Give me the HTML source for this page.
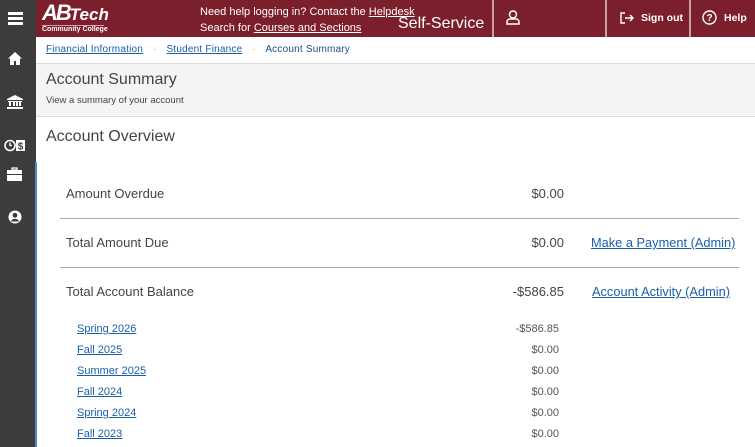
<!DOCTYPE html>
<html><head><style>
*{margin:0;padding:0;box-sizing:border-box}
body{width:755px;height:447px;overflow:hidden;font-family:"Liberation Sans",sans-serif;background:#fff;position:relative;color:#444}
.side{position:absolute;left:0;top:0;width:36px;height:447px;background:#3c3c3c}
.bl{position:absolute;left:35px;top:162px;width:2px;height:285px;background:#4a8bd0}
.hdr{position:absolute;left:36px;top:0;width:719px;height:37px;background:#7a1f2b;color:#fff}
.sep{position:absolute;top:0;width:2px;height:37px;background:#c9a0a6}
a{color:#1a5fa8;text-decoration:underline}
.ab{position:absolute;font-size:12px}
.row{position:absolute;left:60px;width:679px;border-bottom:1px solid #aaa}
.lbl{position:absolute;left:66px;font-size:13px;color:#444}
.amt{position:absolute;right:191px;font-size:13px;color:#444}
.term{position:absolute;left:77px;font-size:11px}
.tamt{position:absolute;right:196px;font-size:11px;color:#555}
</style></head><body>
<div class="side">
<div style="position:absolute;left:8px;top:12px;width:15px;height:3px;background:#fff;box-shadow:0 5px 0 #fff,0 10px 0 #fff"></div>
<svg style="position:absolute;left:8px;top:52px" width="14" height="13" viewBox="0 0 14 13"><path d="M7 0L0 6.5h2V13h4V9h2v4h4V6.5h2z" fill="#fff"/></svg>
<svg style="position:absolute;left:7px;top:95px" width="16" height="14" viewBox="0 0 16 14"><path d="M8 0L0 4v1h16V4z M1 6h14v1H1z M2 7h2v4H2z M6 7h2v4H6z M9 7h2v4H9z M12 7h2v4h-2z M0 12h16v2H0z" fill="#fff"/></svg>
<svg style="position:absolute;left:4px;top:139px" width="22" height="13" viewBox="0 0 22 13"><circle cx="6" cy="6.5" r="5" fill="none" stroke="#fff" stroke-width="1.6"/><path d="M6 3.5v3h2" stroke="#fff" fill="none" stroke-width="1.3"/><rect x="12" y="1" width="9" height="11" fill="#fff"/><text x="16.5" y="10.5" font-size="10" text-anchor="middle" fill="#3c3c3c" font-family="Liberation Sans" font-weight="bold">$</text></svg>
<svg style="position:absolute;left:7px;top:167px" width="15" height="14" viewBox="0 0 15 14"><path d="M5 1h5v2H5z" fill="none" stroke="#fff" stroke-width="1.2"/><rect x="0" y="3" width="15" height="11" fill="#fff"/><rect x="0" y="7" width="15" height="1" fill="#3c3c3c"/></svg>
<svg style="position:absolute;left:8px;top:210px" width="14" height="14" viewBox="0 0 14 14"><circle cx="7" cy="7" r="6.5" fill="#fff"/><circle cx="7" cy="5.3" r="2.4" fill="#3c3c3c"/><path d="M2.8 11.5a4.5 4 0 0 1 8.4 0z" fill="#3c3c3c"/></svg>
</div>
<div class="bl"></div>
<div class="hdr">
<div style="position:absolute;left:6px;top:0px;font:italic bold 22px 'Liberation Sans';letter-spacing:-2px">AB<span style="font-size:17px;letter-spacing:0">Tech</span></div>
<div style="position:absolute;left:6px;top:25px;width:62px;border-top:1px solid #d9a">&nbsp;</div>
<div style="position:absolute;left:6px;top:26px;font:bold 7px 'Liberation Sans'">Community College</div>
<div style="position:absolute;left:164px;top:4px;font-size:11px;line-height:16px;color:#fff">Need help logging in? Contact the <u>Helpdesk</u><br>Search for <u>Courses and Sections</u></div>
<div style="position:absolute;left:362px;top:15px;font-size:16px">Self-Service</div>
<div class="sep" style="left:456px"></div>
<svg style="position:absolute;left:470px;top:10px" width="14" height="15" viewBox="0 0 14 15"><circle cx="7" cy="4.5" r="3.5" fill="none" stroke="#fff" stroke-width="1.5"/><path d="M1 14v-2a3 3 0 0 1 3-3h6a3 3 0 0 1 3 3v2z" fill="none" stroke="#fff" stroke-width="1.5"/></svg>
<div class="sep" style="left:569px"></div>
<svg style="position:absolute;left:584px;top:12px" width="14" height="12" viewBox="0 0 14 12"><path d="M5 1H1v10h4" fill="none" stroke="#fff" stroke-width="1.4"/><path d="M5 6h8M10 3l3 3-3 3" fill="none" stroke="#fff" stroke-width="1.4"/></svg>
<div style="position:absolute;left:605px;top:12px;font:bold 10.5px 'Liberation Sans'">Sign out</div>
<div class="sep" style="left:653px"></div>
<svg style="position:absolute;left:666px;top:10px" width="15" height="15" viewBox="0 0 15 15"><circle cx="7.5" cy="7.5" r="6.5" fill="none" stroke="#fff" stroke-width="1.4"/><text x="7.5" y="11" font-size="10" font-weight="bold" text-anchor="middle" fill="#fff" font-family="Liberation Sans">?</text></svg>
<div style="position:absolute;left:688px;top:12px;font:bold 10.5px 'Liberation Sans'">Help</div>
</div>
<div style="position:absolute;left:36px;top:37px;width:719px;height:27px;background:#fff;border-bottom:1px solid #ddd"></div>
<div class="ab" style="left:46px;top:44px;font-size:10px;letter-spacing:.2px"><a>Financial Information</a> <span style="color:#aaa;margin:0 7px">·</span> <a>Student Finance</a> <span style="color:#aaa;margin:0 7px">·</span> <span style="color:#1a4f8a">Account Summary</span></div>
<div style="position:absolute;left:36px;top:64px;width:719px;height:53px;background:#f4f4f4;border-bottom:1px solid #ddd"></div>
<div style="position:absolute;left:46px;top:71px;font-size:16px;color:#444">Account Summary</div>
<div style="position:absolute;left:46px;top:95px;font-size:9.5px;color:#444">View a summary of your account</div>
<div style="position:absolute;left:46px;top:128px;font-size:16px;color:#444">Account Overview</div>
<div class="row" style="top:170px;height:49px"></div>
<div class="row" style="top:219px;height:49px"></div>
<div class="lbl" style="top:186px">Amount Overdue</div><div class="amt" style="top:186px">$0.00</div>
<div class="lbl" style="top:235px">Total Amount Due</div><div class="amt" style="top:235px">$0.00</div>
<a class="ab" style="left:591px;top:235px;font-size:12.8px">Make a Payment (Admin)</a>
<div class="lbl" style="top:284px">Total Account Balance</div><div class="amt" style="top:284px">-$586.85</div>
<a class="ab" style="left:592px;top:284px;font-size:12.8px">Account Activity (Admin)</a>
<a class="term" style="top:323px">Spring 2026</a><div class="tamt" style="top:323px">-$586.85</div>
<a class="term" style="top:344px">Fall 2025</a><div class="tamt" style="top:344px">$0.00</div>
<a class="term" style="top:365px">Summer 2025</a><div class="tamt" style="top:365px">$0.00</div>
<a class="term" style="top:386px">Fall 2024</a><div class="tamt" style="top:386px">$0.00</div>
<a class="term" style="top:407px">Spring 2024</a><div class="tamt" style="top:407px">$0.00</div>
<a class="term" style="top:428px">Fall 2023</a><div class="tamt" style="top:428px">$0.00</div>
</body></html>
